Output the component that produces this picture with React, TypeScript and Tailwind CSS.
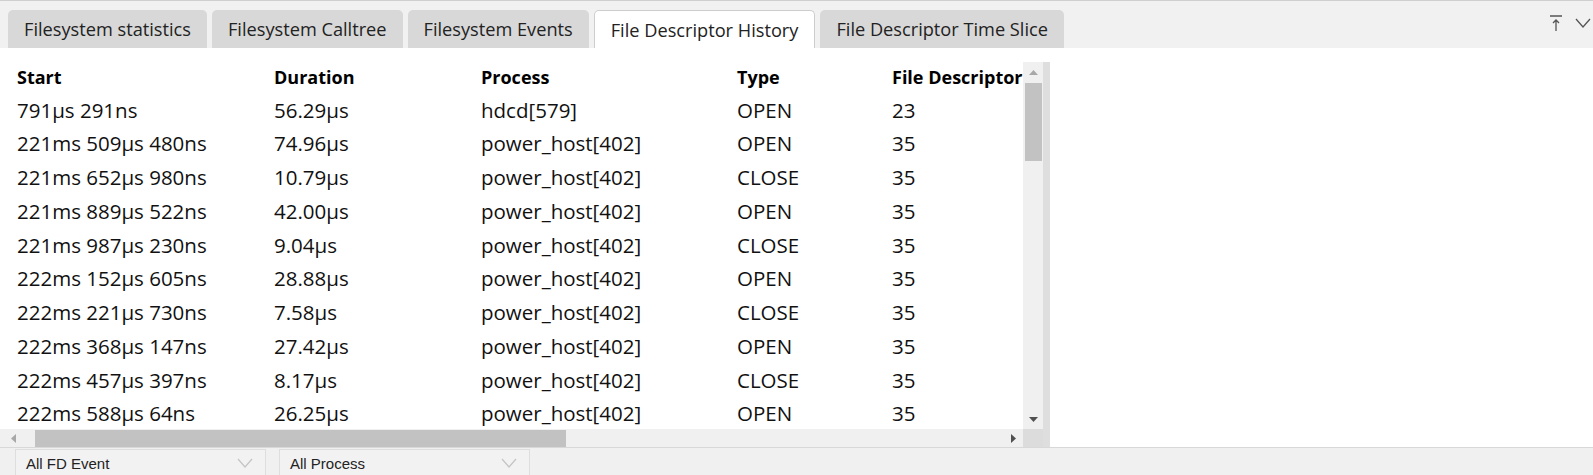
import React from "react"

const rows = [
  ["791μs 291ns", "56.29μs", "hdcd[579]", "OPEN", "23"],
  ["221ms 509μs 480ns", "74.96μs", "power_host[402]", "OPEN", "35"],
  ["221ms 652μs 980ns", "10.79μs", "power_host[402]", "CLOSE", "35"],
  ["221ms 889μs 522ns", "42.00μs", "power_host[402]", "OPEN", "35"],
  ["221ms 987μs 230ns", "9.04μs", "power_host[402]", "CLOSE", "35"],
  ["222ms 152μs 605ns", "28.88μs", "power_host[402]", "OPEN", "35"],
  ["222ms 221μs 730ns", "7.58μs", "power_host[402]", "CLOSE", "35"],
  ["222ms 368μs 147ns", "27.42μs", "power_host[402]", "OPEN", "35"],
  ["222ms 457μs 397ns", "8.17μs", "power_host[402]", "CLOSE", "35"],
  ["222ms 588μs 64ns", "26.25μs", "power_host[402]", "OPEN", "35"],
]

const tabs = [
  "Filesystem statistics",
  "Filesystem Calltree",
  "Filesystem Events",
  "File Descriptor History",
  "File Descriptor Time Slice",
]

const cols = "grid grid-cols-[257px_207px_256px_155px_1fr]"

function Select({ label, width }: { label: string; width: string }) {
  return (
    <div className={`${width} h-[28px] mt-[1px] border border-[#dedede] bg-[#f2f2f2] flex items-center justify-between pl-[10px] pr-[12px]`}>
      <span className="text-[15px] leading-none text-[#222] font-['Liberation_Sans',Arial,sans-serif]">{label}</span>
      <svg width="16" height="10" viewBox="0 0 16 10" fill="none" stroke="#c4c4c4" strokeWidth="1.2">
        <path d="M1 1l7 8 7-8" />
      </svg>
    </div>
  )
}

export default function App() {
  return (
    <div className="w-[1593px] h-[475px] overflow-hidden bg-white flex flex-col font-['Open_Sans','Noto_Sans',sans-serif]">
      {/* Tab bar */}
      <div className="h-[48px] shrink-0 bg-[#f1f1f1] border-t border-[#cfcfcf] flex items-end pl-[8px] relative">
        <div className="flex gap-[5px]">
          {tabs.map((t, i) =>
            i === 3 ? (
              <div
                key={t}
                className="h-[38px] px-[16px] pt-[2px] flex items-center bg-white border border-b-0 border-[#cdcdcd] rounded-t-[5px] text-[18.2px] text-[#222]"
              >
                {t}
              </div>
            ) : (
              <div
                key={t}
                className="h-[38px] px-[16px] pt-[2px] flex items-center bg-[#d8d8d8] rounded-t-[5px] text-[18.2px] text-[#222]"
              >
                {t}
              </div>
            )
          )}
        </div>
        <div className="absolute right-[2px] top-[13px] flex items-center gap-[12px]">
          <svg width="14" height="18" viewBox="0 0 14 18" fill="none" stroke="#555" strokeWidth="1.3">
            <path d="M1 2h12M7 17V6M4 9l3-3 3 3" />
          </svg>
          <svg width="16" height="10" viewBox="0 0 16 10" fill="none" stroke="#555" strokeWidth="1.3">
            <path d="M1 1l7 8 7-8" />
          </svg>
        </div>
      </div>

      {/* Content */}
      <div className="flex-1 min-h-0 flex pt-[14px]">
        <div className="w-[1043px] flex flex-col">
          <div className="flex flex-1 min-h-0">
            <div className="flex-1 overflow-hidden pl-[17px] text-black">
              <div className={`${cols} h-[31px] items-center text-[18px] font-bold whitespace-nowrap`}>
                <div>Start</div>
                <div>Duration</div>
                <div>Process</div>
                <div>Type</div>
                <div className="overflow-hidden">File Descriptor</div>
              </div>
              {rows.map((r, i) => (
                <div key={i} className={`${cols} h-[33.75px] items-center text-[20.5px] text-[#111] whitespace-nowrap`}>
                  {r.map((c, j) => (
                    <div key={j}>{c}</div>
                  ))}
                </div>
              ))}
            </div>
            {/* vertical scrollbar */}
            <div className="w-[20px] bg-[#f0f0f0] flex flex-col items-center">
              <div className="h-[21px] flex items-center justify-center">
                <svg width="9" height="5" viewBox="0 0 9 5"><path d="M0 5L4.5 0 9 5z" fill="#a8a8a8" /></svg>
              </div>
              <div className="w-[17px] h-[78px] bg-[#c2c2c2]" />
              <div className="flex-1" />
              <div className="h-[20px] flex items-center justify-center">
                <svg width="9" height="5" viewBox="0 0 9 5"><path d="M0 0L4.5 5 9 0z" fill="#505050" /></svg>
              </div>
            </div>
          </div>
          {/* horizontal scrollbar */}
          <div className="h-[18px] flex bg-[#f0f0f0]">
            <div className="flex-1 flex items-center">
              <div className="w-[20px] flex items-center justify-center pl-[6px]">
                <svg width="5" height="9" viewBox="0 0 5 9"><path d="M5 0L0 4.5 5 9z" fill="#a8a8a8" /></svg>
              </div>
              <div className="w-[531px] h-[17px] bg-[#c2c2c2] ml-[15px]" />
              <div className="flex-1" />
              <div className="w-[20px] flex items-center justify-center">
                <svg width="5" height="9" viewBox="0 0 5 9"><path d="M0 0L5 4.5 0 9z" fill="#505050" /></svg>
              </div>
            </div>
            <div className="w-[20px] bg-[#dcdcdc]" />
          </div>
        </div>
        <div className="w-[7px] bg-[#dedede]" />
        <div className="flex-1" />
      </div>

      {/* Bottom bar */}
      <div className="h-[28px] shrink-0 bg-[#f0f0f0] border-t border-[#d8d8d8] flex gap-[13px] pl-[15px]">
        <Select label="All FD Event" width="w-[251px]" />
        <Select label="All Process" width="w-[251px]" />
      </div>
    </div>
  )
}
